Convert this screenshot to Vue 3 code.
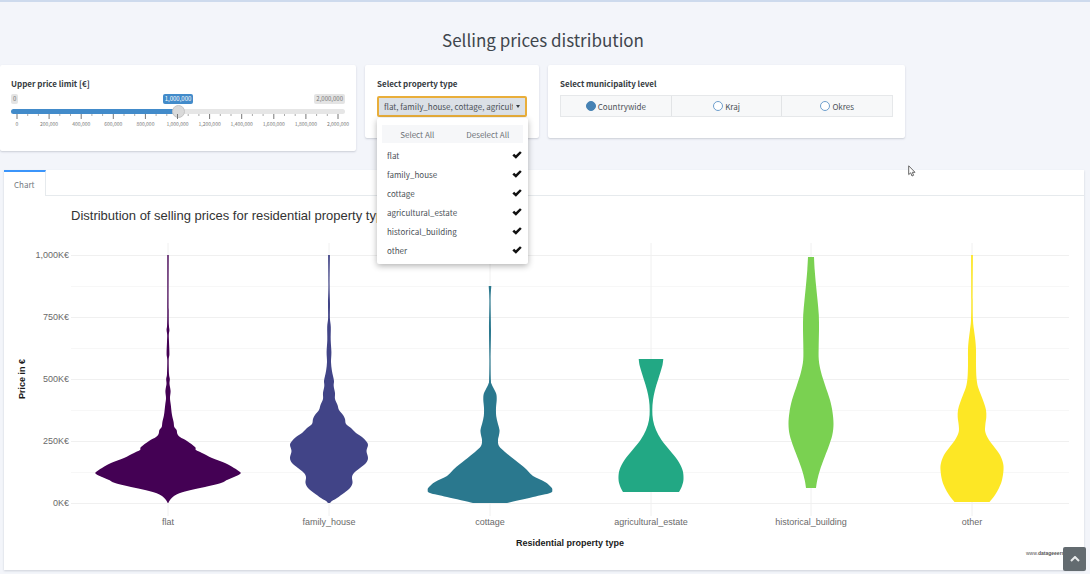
<script setup>
import { ref } from 'vue'

const limit = ref(1000000)
const level = ref('Countrywide')
const levels = ['Countrywide', 'Kraj', 'Okres']
const types = ['flat', 'family_house', 'cottage', 'agricultural_estate', 'historical_building', 'other']
const chosen = ref([...types])
const open = ref(true)

const toggle = (t) => {
  chosen.value = chosen.value.includes(t)
    ? chosen.value.filter((c) => c !== t)
    : types.filter((c) => c === t || chosen.value.includes(c))
}

const ticks = Array.from({ length: 31 }, (_, i) => ({
  x: 6 + (i * 321) / 30,
  major: i % 3 === 0,
  label: ((i / 3) * 200000).toLocaleString('en-US'),
}))

const gridMajor = [
  { y: 255, label: '1,000K€' },
  { y: 317, label: '750K€' },
  { y: 379, label: '500K€' },
  { y: 441, label: '250K€' },
  { y: 503, label: '0K€' },
]
const gridMinor = [286, 348, 410, 472]

// Each profile is a list of [y, half width] pairs from top to bottom.
const violins = [
  { name: 'flat', x: 168, color: '#440154', profile: [[255, 0.7], [310, 0.7], [325, 0.9], [330, 1.4], [335, 0.8], [342, 1], [354, 1.4], [360, 0.7], [374, 1], [379, 1.8], [384, 1.5], [391, 2.6], [398, 2], [405, 2.8], [415, 4], [422, 5.6], [427, 6.3], [430, 8.6], [434, 9.4], [437, 12], [441, 19], [447, 27], [450, 28], [453, 34], [458, 44], [463, 57], [468, 66], [472, 72], [474, 72], [477, 66], [480, 59], [483, 53], [487, 37], [490, 23], [493, 12], [496, 6], [500, 2], [503, 0.3]] },
  { name: 'family_house', x: 329, color: '#414487', profile: [[255, 0.9], [285, 0.6], [303, 1], [318, 0.9], [327, 1.8], [340, 1.7], [352, 2.4], [362, 2], [370, 2.8], [376, 4], [381, 5], [386, 4.7], [393, 6], [399, 6], [405, 8.5], [410, 10], [415, 14], [419, 16], [424, 17], [428, 22], [433, 27], [437, 33], [441, 37], [445, 39], [451, 37.5], [458, 39], [463, 37], [468, 31], [473, 25], [477, 23], [483, 23.5], [488, 21], [493, 15], [498, 8], [501, 3], [503, 1]] },
  { name: 'cottage', x: 490, color: '#2a788e', profile: [[286, 1.3], [300, 0.6], [330, 1], [360, 0.6], [380, 0.9], [384, 1.6], [389, 4], [394, 6.3], [400, 6.7], [408, 6], [416, 6.2], [423, 7.7], [430, 9.5], [435, 9], [440, 8], [446, 9], [452, 15], [460, 25], [469, 36], [476, 43], [482, 55], [487, 61], [490, 62.3], [493, 60], [497, 43], [503, 17]] },
  { name: 'agricultural_estate', x: 651, color: '#22a884', profile: [[359, 12.3], [365, 11.5], [372, 9.5], [380, 7], [390, 4], [400, 2], [410, 1.3], [420, 2], [430, 5], [440, 10.5], [450, 18.5], [460, 26.5], [470, 31.5], [479, 32.5], [486, 31], [492, 28]] },
  { name: 'historical_building', x: 811, color: '#7ad151', profile: [[257, 3], [270, 3.7], [285, 5], [300, 6.5], [315, 7.8], [330, 8], [345, 7.7], [360, 7.8], [372, 10], [385, 14], [400, 19], [412, 21.5], [424, 22.5], [435, 21.3], [447, 17.5], [460, 12.5], [470, 9], [480, 6.3], [488, 5]] },
  { name: 'other', x: 972, color: '#fde725', profile: [[255, 0.9], [300, 0.7], [320, 1], [330, 2], [340, 3.3], [350, 4], [365, 4], [378, 4.5], [387, 6], [395, 9], [403, 12], [410, 14], [417, 14.3], [425, 13.3], [432, 13.3], [440, 17], [448, 23], [455, 28], [463, 31], [470, 31.5], [480, 30], [488, 27], [495, 23], [502, 17.5]] },
]

// Catmull-Rom spline through the points, written as cubic segments.
function spline(p) {
  let d = ''
  for (let i = 0; i < p.length - 1; i++) {
    const a = p[i - 1] || p[i]
    const b = p[i]
    const c = p[i + 1]
    const e = p[i + 2] || c
    d += `C${b[0] + (c[0] - a[0]) / 6} ${b[1] + (c[1] - a[1]) / 6} ${c[0] - (e[0] - b[0]) / 6} ${c[1] - (e[1] - b[1]) / 6} ${c[0]} ${c[1]}`
  }
  return d
}
function outline({ x, profile }) {
  const right = profile.map(([y, w]) => [x + w, y])
  const left = profile.map(([y, w]) => [x - w, y]).reverse()
  return `M${right[0].join(' ')}${spline(right)}L${left[0].join(' ')}${spline(left)}Z`
}
</script>

<template>
  <main class="page">
    <h1>Selling prices distribution</h1>

    <div class="filters">
      <section class="card price">
        <label class="title" for="limit">Upper price limit [€]</label>
        <div class="bubbles">
          <span class="bound">0</span>
          <output class="current" for="limit">{{ limit.toLocaleString('en-US') }}</output>
          <span class="bound">2,000,000</span>
        </div>
        <input
          id="limit"
          v-model.number="limit"
          type="range"
          min="0"
          max="2000000"
          step="10000"
          :style="{ '--fill': limit / 20000 + '%' }"
        />
        <svg class="ruler" viewBox="0 0 334 14" aria-hidden="true">
          <template v-for="t in ticks" :key="t.x">
            <line :x1="t.x" :x2="t.x" y1="0" :y2="t.major ? 5 : 2" :class="{ major: t.major }" />
            <text v-if="t.major" :x="t.x" y="12">{{ t.label }}</text>
          </template>
        </svg>
      </section>

      <section class="card types">
        <span id="types-label" class="title">Select property type</span>
        <div class="dropdown">
          <button class="picker" type="button" aria-labelledby="types-label" :aria-expanded="open" @click="open = !open">
            <span class="picked">{{ chosen.join(', ') }}</span>
            <span class="caret"></span>
          </button>
          <div v-if="open" class="menu">
            <div class="actions">
              <button type="button" @click="chosen = [...types]">Select All</button>
              <button type="button" @click="chosen = []">Deselect All</button>
            </div>
            <button v-for="t in types" :key="t" class="option" type="button" :aria-pressed="chosen.includes(t)" @click="toggle(t)">
              <span>{{ t }}</span>
              <svg v-if="chosen.includes(t)" viewBox="0 0 11 9" aria-hidden="true">
                <path d="M0.4 5 L2.4 3 L4.2 4.6 L8.8 0.3 L10.7 2 L4.3 8.5 Z" />
              </svg>
            </button>
          </div>
        </div>
      </section>

      <section class="card levels">
        <span id="level-label" class="title">Select municipality level</span>
        <div class="segments" role="radiogroup" aria-labelledby="level-label">
          <label v-for="l in levels" :key="l">
            <input v-model="level" type="radio" name="level" :value="l" />
            {{ l }}
          </label>
        </div>
      </section>
    </div>

    <section class="panel">
      <div class="tabs" role="tablist">
        <button class="tab" type="button" role="tab" aria-selected="true">Chart</button>
      </div>
      <svg class="chart" viewBox="4 196 1080 374" role="img" aria-label="Distribution of selling prices">
        <text class="heading" x="71" y="220">Distribution of selling prices for residential property types</text>
        <g class="minor">
          <line v-for="y in gridMinor" :key="y" x1="71" x2="1069" :y1="y + 0.5" :y2="y + 0.5" />
        </g>
        <g class="grid">
          <line v-for="g in gridMajor" :key="g.y" x1="71" x2="1069" :y1="g.y + 0.5" :y2="g.y + 0.5" />
          <line v-for="v in violins" :key="v.x" :x1="v.x" :x2="v.x" y1="243" y2="516" />
        </g>
        <text v-for="g in gridMajor" :key="g.label" class="tick end" x="69" :y="g.y + 3">{{ g.label }}</text>
        <template v-for="v in violins" :key="v.name">
          <path :d="outline(v)" :fill="v.color" />
          <text class="tick mid" :x="v.x" y="525">{{ v.name }}</text>
        </template>
        <text class="axis" x="570" y="546">Residential property type</text>
        <text class="axis" transform="translate(25 379) rotate(-90)">Price in €</text>
        <text class="credit" x="1026" y="555">www.<tspan>datageeers.sk</tspan></text>
      </svg>
    </section>

    <button class="to-top" type="button" aria-label="Back to top">
      <svg viewBox="0 0 10 6" aria-hidden="true"><path d="M1 5 L5 1 L9 5" /></svg>
    </button>
    <svg class="pointer" viewBox="0 0 8 12" aria-hidden="true">
      <path d="M0.7 0.8 V9.6 L2.7 7.8 L4 11 L5.6 10.3 L4.3 7.3 H7 Z" />
    </svg>
  </main>
</template>

<style>
body {
  background: #f3f5fa;
}
</style>

<style scoped>
.page {
  position: relative;
  box-sizing: border-box;
  border-top: 2px solid #cddaed;
  padding-bottom: 3px;
  font-family: 'Noto Sans CJK SC', 'Open Sans', sans-serif;
  font-size: 8px;
  color: #4b5157;
}
button,
input {
  margin: 0;
  font: inherit;
  color: inherit;
}
h1 {
  margin: 0;
  padding: 24px 4px 12px 0;
  text-align: center;
  font-size: 17px;
  line-height: 27px;
  font-weight: 400;
  color: #3f464d;
}
.filters {
  display: grid;
  grid-template-columns: 356fr 174fr 357fr 176fr;
  column-gap: 9px;
  align-items: start;
  min-height: 105px;
}
.card {
  min-width: 0;
  box-sizing: border-box;
  height: 73px;
  padding: 11px 12px;
  background: #fff;
  border-radius: 2px;
  box-shadow: 0 1px 2px rgba(60, 70, 90, 0.22);
}
.card.price {
  height: 86px;
  padding-left: 11px;
  padding-right: 11px;
}
.title {
  display: block;
  line-height: 16px;
  font-weight: 700;
  color: #343a40;
}
.bubbles {
  display: grid;
  grid-template-columns: 1fr auto 1fr;
  margin-top: 2px;
  font-size: 6px;
  line-height: 10px;
}
.bubbles > * {
  padding: 0 2px;
  border-radius: 2px;
  justify-self: start;
}
.bound {
  background: #e4e4e4;
  color: #777;
}
.bubbles .bound:last-child {
  justify-self: end;
}
.current {
  background: #428bca;
  color: #fff;
}
.price input {
  display: block;
  appearance: none;
  width: 100%;
  height: 14px;
  background: none;
}
.price input::-webkit-slider-runnable-track {
  height: 5px;
  border-radius: 3px;
  background: linear-gradient(to right, #428bca var(--fill), #e6e6e6 var(--fill));
}
.price input::-webkit-slider-thumb {
  appearance: none;
  width: 13px;
  height: 13px;
  margin-top: -4px;
  border-radius: 50%;
  border: 1px solid #c4c4c4;
  background: #dadada;
}
.ruler {
  display: block;
  width: 100%;
  margin-top: -4px;
  overflow: visible;
}
.ruler line {
  stroke: #aaa;
  stroke-width: 1;
}
.ruler line.major {
  stroke: #777;
}
.ruler text {
  font-size: 5px;
  text-anchor: middle;
  fill: #777;
}
.dropdown {
  position: relative;
  margin-top: 4px;
}
.picker {
  display: flex;
  align-items: center;
  gap: 3px;
  width: 100%;
  height: 21px;
  padding: 0 5px;
  border: 2px solid #e9ae3a;
  border-radius: 2px;
  background: #dbe0e6;
}
.picked {
  flex: 1;
  overflow: hidden;
  white-space: nowrap;
  text-align: left;
}
.caret {
  border: 2px solid transparent;
  border-top: 3px solid #343a40;
  border-bottom: 0;
}
.menu {
  position: absolute;
  z-index: 2;
  top: 22px;
  left: 0;
  right: -1px;
  padding: 7px 0 4px;
  background: #fff;
  border-radius: 2px;
  box-shadow: 0 2px 6px rgba(0, 0, 0, 0.3);
}
.actions {
  display: flex;
  margin: 0 5px 3px;
}
.actions button {
  flex: 1;
  height: 18px;
  padding: 0;
  border: 0;
  background: #f6f7f9;
  color: #6d7277;
}
.option {
  display: flex;
  align-items: center;
  justify-content: space-between;
  width: 100%;
  height: 19px;
  padding: 0 6px 0 10px;
  border: 0;
  background: none;
}
.option svg {
  width: 10px;
  fill: #111;
}
.segments {
  display: flex;
  margin-top: 3px;
  border: 1px solid #e6e8ea;
  background: #f7f8f9;
}
.segments label {
  flex: 1;
  display: flex;
  align-items: center;
  justify-content: center;
  gap: 2px;
  height: 20px;
}
.segments label + label {
  border-left: 1px solid #e2e4e6;
}
.segments input {
  appearance: none;
  box-sizing: border-box;
  width: 10px;
  height: 10px;
  border: 1px solid #6e9fcd;
  border-radius: 50%;
  background: #fff;
}
.segments input:checked {
  border-color: #4682b4;
  background: #4682b4;
}
.panel {
  margin: 0 6px 0 4px;
  background: #fff;
  box-shadow: 0 1px 2px rgba(60, 70, 90, 0.2);
}
.tabs {
  display: flex;
  height: 26px;
  box-sizing: border-box;
  border-bottom: 1px solid #e6eaed;
}
.tab {
  height: 26px;
  padding: 0 10px;
  border: 0;
  border-top: 2px solid #3b95fb;
  border-right: 1px solid #e6eaed;
  background: #fff;
  color: #74797f;
}
.chart {
  display: block;
  width: 100%;
  font-family: 'Liberation Sans', Arial, sans-serif;
}
.heading {
  font-size: 13px;
  fill: #333;
}
.grid line {
  stroke: #f0f0f0;
}
.minor line {
  stroke: #f7f7f7;
}
.tick {
  font-size: 9px;
  fill: #6a6a6a;
}
.end {
  text-anchor: end;
}
.mid,
.axis {
  text-anchor: middle;
}
.axis {
  font-size: 9px;
  font-weight: 700;
  fill: #1a1a1a;
}
.credit {
  font-size: 5px;
  fill: #555;
}
.credit tspan {
  font-weight: 700;
}
.to-top {
  position: fixed;
  right: 4px;
  bottom: 3px;
  display: grid;
  place-items: center;
  width: 23px;
  height: 24px;
  padding: 0;
  border: 0;
  border-radius: 2px;
  background: #636b70;
}
.to-top svg {
  width: 10px;
  fill: none;
  stroke: #e8eaeb;
  stroke-width: 2;
}
.pointer {
  position: absolute;
  left: 908px;
  top: 163px;
  width: 8px;
  fill: #fff;
  stroke: #666;
  stroke-width: 1;
}
</style>
